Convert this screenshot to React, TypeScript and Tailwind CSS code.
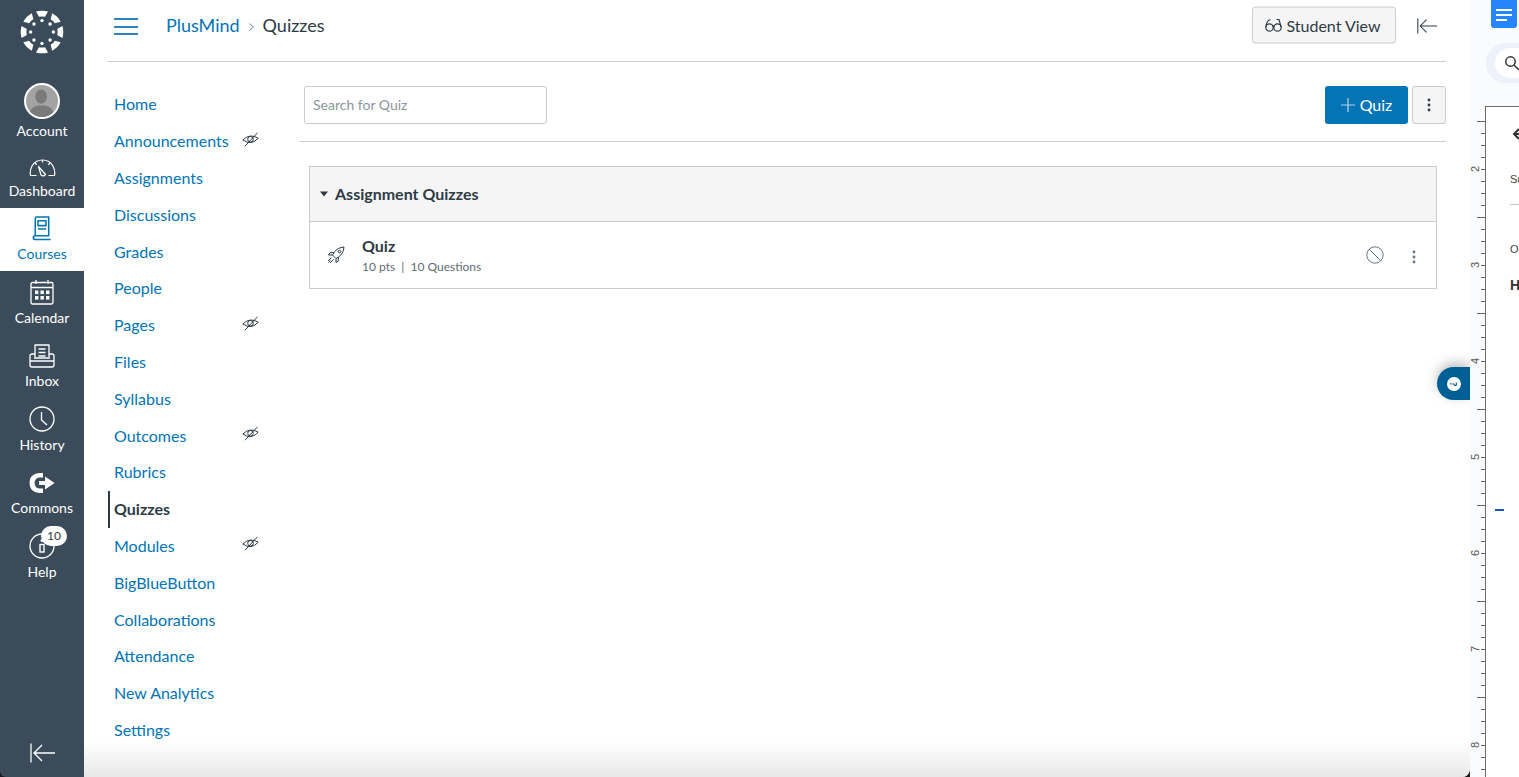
import React from 'react';

const courseLinks = [
  { label: 'Home' },
  { label: 'Announcements', hidden: true },
  { label: 'Assignments' },
  { label: 'Discussions' },
  { label: 'Grades' },
  { label: 'People' },
  { label: 'Pages', hidden: true },
  { label: 'Files' },
  { label: 'Syllabus' },
  { label: 'Outcomes', hidden: true },
  { label: 'Rubrics' },
  { label: 'Quizzes', active: true },
  { label: 'Modules', hidden: true },
  { label: 'BigBlueButton' },
  { label: 'Collaborations' },
  { label: 'Attendance' },
  { label: 'New Analytics' },
  { label: 'Settings' },
];

const CanvasLogo = () => (
  <svg width="44" height="44" viewBox="-22 -22 44 44" fill="white">
    {[0, 45, 90, 135, 180, 225, 270, 315].map((a) => (
      <g key={a} transform={`rotate(${a})`}>
        <path d="M-6 -20.4 Q0 -22.2 6 -20.4 L3 -15.2 Q0 -16 -3 -15.2 Z" />
        <circle cx="0" cy="-11.4" r="1.7" />
      </g>
    ))}
  </svg>
);

const Avatar = () => (
  <div className="w-[36px] h-[36px] rounded-full border-2 border-white overflow-hidden bg-[#a3a3a3]">
    <svg viewBox="0 0 36 36" className="w-full h-full" fill="#7a7a7a">
      <ellipse cx="17" cy="13" rx="6.5" ry="8" />
      <path d="M3 36 Q4 24 14 23 L21 23 Q31 24 32 36 Z" />
    </svg>
  </div>
);

const DashboardIcon = () => (
  <svg width="27" height="18" viewBox="0 0 27 18" fill="none" stroke="white" strokeWidth="1.2" strokeLinejoin="round" className="translate-y-[2px]">
    <path d="M7.5 16.5 H1.5 Q0.5 12 3 7 Q6.5 1 13.5 1 Q20.5 1 24 7 Q26.5 12 25.5 16.5 H19.5" />
    <path d="M9.5 7.5 L12 16 Q14.5 17.8 16.5 15.5 Z" />
    <path d="M13.5 1 V3.5 M6 4 L7.8 5.8 M21 4 L19.2 5.8" />
  </svg>
);

const CoursesIcon = () => (
  <svg width="20" height="25" viewBox="0 0 20 26" fill="none" stroke="#0374b5" strokeWidth="1.6" strokeLinejoin="round">
    <path d="M3 20.5 V2.5 Q3 1 4.5 1 H17 V20.5 H3 Q1 20.5 1 22.5 Q1 24.5 3 24.5 H19" />
    <rect x="5.8" y="5" width="8.4" height="5" />
    <path d="M5.8 13.5 H14.2" />
  </svg>
);

const CalendarIcon = () => (
  <svg width="24" height="26" viewBox="0 0 24 26" fill="none" stroke="white" strokeWidth="1.3">
    <rect x="1" y="3.5" width="22" height="21.5" rx="1.5" />
    <path d="M1 8.5 H23 M6 1 V5 M18 1 V5" />
    <g fill="white" stroke="none">
      {[5, 10.5, 16].map((x) =>
        [11.5, 17].map((y) => <rect key={`${x}-${y}`} x={x} y={y} width="3.4" height="3.6" />)
      )}
    </g>
  </svg>
);

const InboxIcon = () => (
  <svg width="26" height="24" viewBox="0 0 26 24" fill="none" stroke="white" strokeWidth="1.3" strokeLinejoin="round">
    <path d="M6 13 V1 H20 V13" />
    <path d="M9.5 5 H16.5 M9.5 8.5 H16.5 M9.5 12 H16.5" />
    <path d="M6 10 H3 Q1 10 1 12 V21 Q1 23 3 23 H23 Q25 23 25 21 V12 Q25 10 23 10 H20" />
    <path d="M1 17 H25 M5 14 H21" />
  </svg>
);

const HistoryIcon = () => (
  <svg width="26" height="26" viewBox="0 0 26 26" fill="none" stroke="white" strokeWidth="1.3">
    <circle cx="13" cy="13" r="12" />
    <path d="M12.5 6 V14 L18 19" />
  </svg>
);

const CommonsIcon = () => (
  <svg width="26" height="20" viewBox="0 0 26 20" fill="white">
    <path d="M11 0 Q3 0 1 6.5 Q0 10 1 13.5 Q3 20 11 20 L14 20 L14 15.5 L11 15.5 Q6 15.5 5.5 10 Q6 4.5 11 4.5 L14 4.5 L14 0 Z" />
    <path d="M10 8 H16 V3.5 L25.5 10 L16 16.5 V12 H10 Z" />
  </svg>
);

const HelpIcon = () => (
  <svg width="26" height="26" viewBox="0 0 26 26" fill="none" stroke="white" strokeWidth="1.3">
    <circle cx="13" cy="13" r="12" />
    <rect x="11" y="11.5" width="4" height="7.5" strokeWidth="1.4" />
    <circle cx="13" cy="7.5" r="1.5" fill="white" stroke="none" />
  </svg>
);

const CollapseArrow = ({ color, w = 25 }: { color: string; w?: number }) => (
  <svg width={w} height={(w * 20) / 25} viewBox="0 0 25 20" fill="none" stroke={color} strokeWidth="1.3">
    <path d="M1 0.5 V19.5" />
    <path d="M25 10 H4 M12 2 L4 10 L12 18" />
  </svg>
);

const HiddenEye = () => (
  <svg width="17" height="15" viewBox="0 0 17 15" fill="none" stroke="#2d3b45" strokeWidth="1" className="-translate-y-[2px] shrink-0">
    <path d="M0.8 8 Q8 1 16.2 6.2 Q9.5 14 0.8 8 Z" />
    <circle cx="8.5" cy="7.3" r="2.8" />
    <path d="M3 14.2 L15.5 0.8" />
  </svg>
);

const Glasses = () => (
  <svg width="17" height="14" viewBox="0 0 17 14" fill="none" stroke="#2d3b45" strokeWidth="1.2">
    <circle cx="4.5" cy="9" r="3.7" />
    <circle cx="12.5" cy="9" r="3.7" />
    <path d="M0.9 8.5 Q1.5 2 5.5 1 M16.1 8.5 L14 1 L11.5 1 M7.5 8 Q8.5 7 9.5 8" />
  </svg>
);

const Rocket = () => (
  <svg width="18" height="18" viewBox="0 0 18 18" fill="none" stroke="#2d3b45" strokeWidth="1" strokeLinejoin="round">
    <path d="M17 1 Q10.5 1.5 7 6.5 L5.5 9 L9 12.5 L11.5 11 Q16.5 7.5 17 1 Z" />
    <path d="M7 6.5 L3 6.8 L1.5 9 L5.5 9 M11.5 11 L11.2 15 L9 16.5 L9 12.5" />
    <circle cx="12.5" cy="5.5" r="1.3" />
    <path d="M4.5 11.5 L1 15 M6.5 13.5 L3 17 M3.5 14.5 L1.5 16.5" />
  </svg>
);

const Kebab = ({ color = '#2d3b45' }: { color?: string }) => (
  <svg width="4" height="14" viewBox="0 0 4 14" fill={color}>
    <circle cx="2" cy="2" r="1.4" />
    <circle cx="2" cy="7" r="1.4" />
    <circle cx="2" cy="12" r="1.4" />
  </svg>
);

const Ruler = () => {
  const ticks = Array.from({ length: 56 }, (_, i) => 15.5 + i * 12);
  const labels = [2, 3, 4, 5, 6, 7, 8];
  return (
    <svg width="15" height="671" viewBox="0 0 15 671" className="shrink-0 block">
      {ticks.map((y, i) => {
        const k = i % 8;
        return <path key={y} d={`M${k === 0 ? 7 : 11} ${y} H15`} stroke="#6b6b6b" strokeWidth="1" />;
      })}
      {labels.map((n, i) => (
        <text
          key={n}
          transform={`translate(9 ${63 + i * 96}) rotate(-90)`}
          textAnchor="middle"
          fontSize="11"
          fill="#555"
          style={{ fontFamily: '"Liberation Sans", sans-serif' }}
        >
          {n}
        </text>
      ))}
    </svg>
  );
};

const GlobalNavItem = ({
  icon,
  label,
  active,
  h = 'h-[63.5px]',
  badge,
}: {
  icon: React.ReactNode;
  label: string;
  active?: boolean;
  h?: string;
  badge?: string;
}) => (
  <div className={`${h} relative flex flex-col items-center justify-center gap-[3px] ${active ? 'bg-white text-[#0374b5]' : 'text-white'}`}>
    <div className="h-[27px] flex items-center justify-center">{icon}</div>
    <span className="text-[14px] leading-[18px]">{label}</span>
    {badge && (
      <span className="absolute left-[41px] top-[1px] h-[20px] min-w-[26px] px-[5px] rounded-full bg-white text-[#2d3b45] text-[12px] leading-[20px] text-center">
        {badge}
      </span>
    )}
  </div>
);

export default function App() {
  return (
    <div className="h-screen w-full flex overflow-hidden bg-[#1a1a1a] text-[#2d3b45] font-['Lato',sans-serif]">
      {/* Global nav */}
      <aside className="w-[84px] shrink-0 bg-[#3b4b5a] rounded-bl-[6px] flex flex-col">
        <div className="h-[64px] pt-[10px] flex justify-center">
          <CanvasLogo />
        </div>
        <div className="h-[81px] pt-[19px] flex flex-col items-center text-white gap-[3px]">
          <Avatar />
          <span className="text-[14px] leading-[18px]">Account</span>
        </div>
        <GlobalNavItem icon={<DashboardIcon />} label="Dashboard" h="h-[63px] pb-[1px]" />
        <GlobalNavItem icon={<CoursesIcon />} label="Courses" active h="h-[63px] pb-[1px]" />
        <GlobalNavItem icon={<CalendarIcon />} label="Calendar" h="h-[63px]" />
        <GlobalNavItem icon={<InboxIcon />} label="Inbox" h="h-[64px]" />
        <GlobalNavItem icon={<HistoryIcon />} label="History" />
        <GlobalNavItem icon={<CommonsIcon />} label="Commons" />
        <GlobalNavItem icon={<HelpIcon />} label="Help" badge="10" />
        <div className="mt-auto pb-[14px] flex justify-center">
          <CollapseArrow color="white" />
        </div>
      </aside>

      {/* Main area */}
      <main className="relative w-[1386px] shrink-0 bg-white rounded-br-[8px] overflow-hidden">
        <header className="mx-6 mr-[24px] h-[62px] border-b border-[#c7cdd1] flex items-center pl-[6px]">
          <div className="w-[24px] flex flex-col gap-[5.5px] -translate-y-[4px]">
            <span className="h-[2px] bg-[#2a83bf]" />
            <span className="h-[2px] bg-[#2a83bf]" />
            <span className="h-[2px] bg-[#2a83bf]" />
          </div>
          <nav className="ml-[28px] flex items-center text-[18px] -translate-y-[5px]">
            <span className="text-[#0374b5]">PlusMind</span>
            <svg width="5" height="8" viewBox="0 0 5 8" fill="none" stroke="#73818c" strokeWidth="1" className="mx-[9px] translate-y-[1px]">
              <path d="M0.5 0.5 L4.5 4 L0.5 7.5" />
            </svg>
            <span>Quizzes</span>
          </nav>
          <button className="ml-auto h-[37px] w-[144px] -translate-y-[5.5px] rounded-[3px] border border-[#c7cdd1] bg-[#f5f5f5] flex items-center justify-center gap-[4px] text-[16px] pr-[2px]">
            <Glasses />
            Student View
          </button>
          <div className="ml-[21px] mr-[9px] -translate-y-[5px]">
            <CollapseArrow color="#2d3b45" w={20} />
          </div>
        </header>

        <div className="flex ml-6 pt-[24px]">
          {/* Course nav */}
          <ul className="w-[152px] shrink-0">
            {courseLinks.map((l) => (
              <li
                key={l.label}
                className={`h-[36.8px] flex items-center justify-between pr-[1px] text-[16px] ${
                  l.active ? 'border-l-2 border-[#2d3b45] pl-[4px] font-bold' : 'pl-[6px] text-[#0374b5]'
                }`}
              >
                <span className="whitespace-nowrap">{l.label}</span>
                {l.hidden && <HiddenEye />}
              </li>
            ))}
          </ul>

          {/* Content */}
          <section className="ml-[40px] w-[1146px]">
            <div className="h-[56px] pl-[4px] border-b border-[#c7cdd1] flex items-start">
              <input
                readOnly
                placeholder="Search for Quiz"
                className="w-[243px] h-[38px] px-[8px] pb-[1px] rounded-[3px] border border-[#c7cdd1] text-[14px] placeholder:text-[#8b969e] outline-none"
              />
              <button className="ml-auto h-[38px] w-[83px] rounded-[3px] bg-[#0374b5] text-white text-[16px] flex items-center justify-center gap-[5px]">
                <svg width="14" height="14" viewBox="0 0 14 14" stroke="#b9d6e8" strokeWidth="1.2">
                  <path d="M7 0 V14 M0 7 H14" />
                </svg>
                Quiz
              </button>
              <button className="ml-[4px] h-[38px] w-[34px] rounded-[3px] border border-[#c7cdd1] bg-[#f5f5f5] flex items-center justify-center">
                <Kebab />
              </button>
            </div>

            <div className="mt-[24px] mx-[9px] border border-[#c7cdd1]">
              <div className="h-[55px] pb-[1px] bg-[#f5f5f5] border-b border-[#c7cdd1] flex items-center pl-[10px] gap-[7px]">
                <svg width="8" height="6" viewBox="0 0 8 6" fill="#2d3b45">
                  <path d="M0 0.5 H8 L4 5.5 Z" />
                </svg>
                <span className="text-[16px] font-bold">Assignment Quizzes</span>
              </div>
              <div className="h-[66px] flex items-center pl-[17px] pr-[20px]">
                <Rocket />
                <div className="ml-[17px]">
                  <div className="text-[16px] font-bold leading-[20px]">Quiz</div>
                  <div className="mt-[3px] text-[12px] leading-[16px] text-[#5f6c75]">10 pts&nbsp; |&nbsp; 10 Questions</div>
                </div>
                <svg width="18" height="18" viewBox="0 0 18 18" fill="none" stroke="#6b7780" strokeWidth="1" className="ml-auto">
                  <circle cx="9" cy="9" r="8.2" />
                  <path d="M3.2 3.2 L14.8 14.8" />
                </svg>
                <div className="ml-[28px] translate-y-[2px]">
                  <Kebab color="#6b7780" />
                </div>
              </div>
            </div>
          </section>
        </div>

        {/* Floating help tab */}
        <div className="absolute right-0 top-[367px] w-[33px] h-[33px] rounded-l-full bg-[#005f95] shadow-[0_-4px_12px_rgba(0,0,0,0.25)] flex items-center justify-center">
          <span className="w-[14px] h-[14px] rounded-full bg-white text-[#005f95] text-[10px] leading-[14px] font-black text-center rotate-90">?</span>
        </div>

        {/* Bottom fade */}
        <div className="absolute left-0 right-0 bottom-0 h-[36px] pointer-events-none bg-gradient-to-b from-transparent to-[#e8e8e8]" />
      </main>

      {/* Neighbouring document window */}
      <aside className="flex-1 min-w-0 bg-[#f9fbfd] overflow-hidden">
        <div className="h-[106px] relative">
          <div className="absolute left-[21px] top-0 w-[26px] h-[28px] rounded-b-[3px] bg-[#2684fc] flex flex-col items-center justify-center gap-[3px] pt-[1px]">
            <span className="w-[16px] h-[2px] bg-white" />
            <span className="w-[16px] h-[2px] bg-white" />
            <span className="w-[11px] h-[2px] bg-white self-start ml-[5px]" />
          </div>
          <div className="absolute left-[16px] top-[43px] w-[60px] h-[40px] rounded-full bg-[#edf2fa] pl-[9px] pt-[5px]">
            <div className="h-[30px] rounded-full bg-white pl-[9px] flex items-center">
              <svg width="16" height="16" viewBox="0 0 16 16" fill="none" stroke="#333" strokeWidth="1.5" className="shrink-0">
                <circle cx="6.5" cy="6.5" r="4.7" />
                <path d="M10 10 L15 15" />
              </svg>
            </div>
          </div>
        </div>
        <div className="flex">
          <Ruler />
          <div className="flex-1 h-[671px] bg-white border-l border-t border-[#6b6b6b] pl-[24px] overflow-hidden text-[#444] font-['Liberation_Sans',sans-serif] whitespace-nowrap">
            <svg width="14" height="14" viewBox="0 0 14 14" fill="none" stroke="#333" strokeWidth="2" className="mt-[20px] block ml-[2px]">
              <path d="M14 7 H2 M7 2 L2 7 L7 12" />
            </svg>
            <div className="mt-[31px] text-[11px] leading-[14px]">Su</div>
            <div className="mt-[18px] h-px bg-[#c8c8c8]" />
            <div className="mt-[37px] text-[11px] leading-[14px]">Or</div>
            <div className="mt-[20px] text-[14px] leading-[18px] font-bold text-[#333]">H</div>
            <div className="mt-[215px] -ml-[15px] w-[9px] h-[2px] bg-[#1a56b8]" />
          </div>
        </div>
      </aside>
    </div>
  );
}
